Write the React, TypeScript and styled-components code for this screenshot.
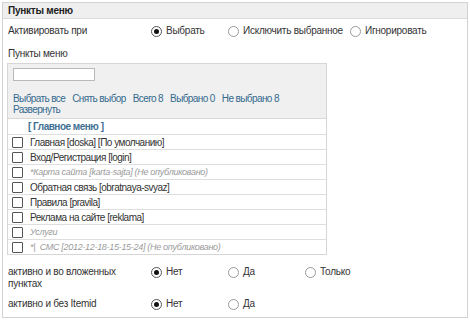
import React from 'react';
import styled, { createGlobalStyle } from 'styled-components';

const GlobalStyle = createGlobalStyle`
    body {
        margin: 0;
        background: #fff;
        font-family: "Liberation Sans", Arial, sans-serif;
        font-size: 10px;
        letter-spacing: -0.25px;
        color: #333;
    }
`;

const Page = styled.div`
    padding: 2px;
`;

const Box = styled.div`
    width: 464px;
    height: 314px;
    border: 1px solid #d2d2d2;
    box-sizing: content-box;
`;

const Header = styled.div`
    height: 15px;
    line-height: 15px;
    padding-left: 5px;
    background: #efefef;
    border-bottom: 1px solid #dcdcdc;
    font-weight: bold;
    color: #222;
`;

const Row = styled.div<{ $top?: number }>`
    display: flex;
    align-items: flex-start;
    margin-top: ${p => p.$top ?? 0}px;
    padding-left: 5px;
`;

const Label = styled.div`
    width: 143px;
    flex: none;
    line-height: 12px;
    padding-right: 10px;
    box-sizing: border-box;
`;

const Options = styled.div`
    display: flex;
`;

const Option = styled.label`
    display: flex;
    align-items: center;
    min-width: 70px;
    margin-right: 7px;
    line-height: 12px;
    white-space: nowrap;
`;

const Radio = styled.span<{ $on?: boolean }>`
    width: 9px;
    height: 9px;
    border: 1px solid ${p => (p.$on ? '#555' : '#9a9a9a')};
    border-radius: 50%;
    margin-right: 4px;
    background: #fff;
    position: relative;
    flex: none;

    &::after {
        content: '';
        display: ${p => (p.$on ? 'block' : 'none')};
        position: absolute;
        left: 2px;
        top: 2px;
        width: 5px;
        height: 5px;
        border-radius: 50%;
        background: #111;
    }
`;

const SubTitle = styled.div`
    padding-left: 5px;
    margin-top: 10px;
    line-height: 14px;
`;

const Panel = styled.div`
    margin: 2px 0 0 4px;
    width: 318px;
    border: 1px solid #d6d6d6;
    letter-spacing: -0.5px;
`;

const Tools = styled.div`
    background: #f0f0f0;
    padding: 4px 5px 3px;
    border-bottom: 1px solid #d8d8d8;
`;

const Search = styled.input`
    display: block;
    width: 82px;
    height: 13px;
    box-sizing: border-box;
    border: 1px solid #b9b9b9;
    background: #fff;
    padding: 0;
    margin: 0 0 12px 0;
`;

const Links = styled.div`
    display: flex;
    flex-wrap: wrap;
    column-gap: 7px;
    line-height: 11px;
    width: 290px;
    letter-spacing: -0.6px;
`;

const Link = styled.span`
    color: #336a8e;
`;

const Item = styled.div<{ $muted?: boolean; $head?: boolean }>`
    display: flex;
    align-items: center;
    height: ${p => (p.$head ? 15 : 14)}px;
    padding-left: ${p => (p.$head ? 20 : 4)}px;
    border-top: ${p => (p.$head ? 'none' : '1px solid #dedede')};
    color: ${p => (p.$muted ? '#9a9a9a' : '#333')};
    font-style: ${p => (p.$muted ? 'italic' : 'normal')};
    font-size: ${p => (p.$muted ? 9 : 10)}px;
    letter-spacing: ${p => (p.$muted ? -0.3 : -0.5)}px;
    white-space: pre;
`;

const Group = styled.span`
    color: #3f6f93;
    font-weight: bold;
`;

const Check = styled.span`
    width: 9px;
    height: 9px;
    border: 1px solid #555;
    border-radius: 1px;
    background: #fff;
    margin-right: 7px;
    flex: none;
`;

const items: { text: string; muted?: boolean }[] = [
    { text: 'Главная [doska] [По умолчанию]' },
    { text: 'Вход/Регистрация [login]' },
    { text: '*Карта сайта [karta-sajta] (Не опубликовано)', muted: true },
    { text: 'Обратная связь [obratnaya-svyaz]' },
    { text: 'Правила [pravila]' },
    { text: 'Реклама на сайте [reklama]' },
    { text: 'Услуги', muted: true },
    { text: '*|  СМС [2012-12-18-15-15-24] (Не опубликовано)', muted: true },
];

const App: React.FC = () => {
    return (
        <Page>
            <GlobalStyle />
            <Box>
                <Header>Пункты меню</Header>
                <Row $top={6}>
                    <Label>Активировать при</Label>
                    <Options>
                        <Option><Radio $on />Выбрать</Option>
                        <Option><Radio />Исключить выбранное</Option>
                        <Option><Radio />Игнорировать</Option>
                    </Options>
                </Row>
                <SubTitle>Пункты меню</SubTitle>
                <Panel>
                    <Tools>
                        <Search />
                        <Links>
                            <Link>Выбрать все</Link>
                            <Link>Снять выбор</Link>
                            <Link>Всего 8</Link>
                            <Link>Выбрано 0</Link>
                            <Link>Не выбрано 8</Link>
                            <Link>Развернуть</Link>
                        </Links>
                    </Tools>
                    <Item $head><Group>[ Главное меню ]</Group></Item>
                    {items.map(it => (
                        <Item key={it.text} $muted={it.muted}>
                            <Check />
                            {it.text}
                        </Item>
                    ))}
                </Panel>
                <Row $top={11}>
                    <Label>активно и во вложенных пунктах</Label>
                    <Options>
                        <Option><Radio $on />Нет</Option>
                        <Option><Radio />Да</Option>
                        <Option><Radio />Только</Option>
                    </Options>
                </Row>
                <Row $top={8}>
                    <Label>активно и без Itemid</Label>
                    <Options>
                        <Option><Radio $on />Нет</Option>
                        <Option><Radio />Да</Option>
                    </Options>
                </Row>
            </Box>
        </Page>
    );
};

export default App;
